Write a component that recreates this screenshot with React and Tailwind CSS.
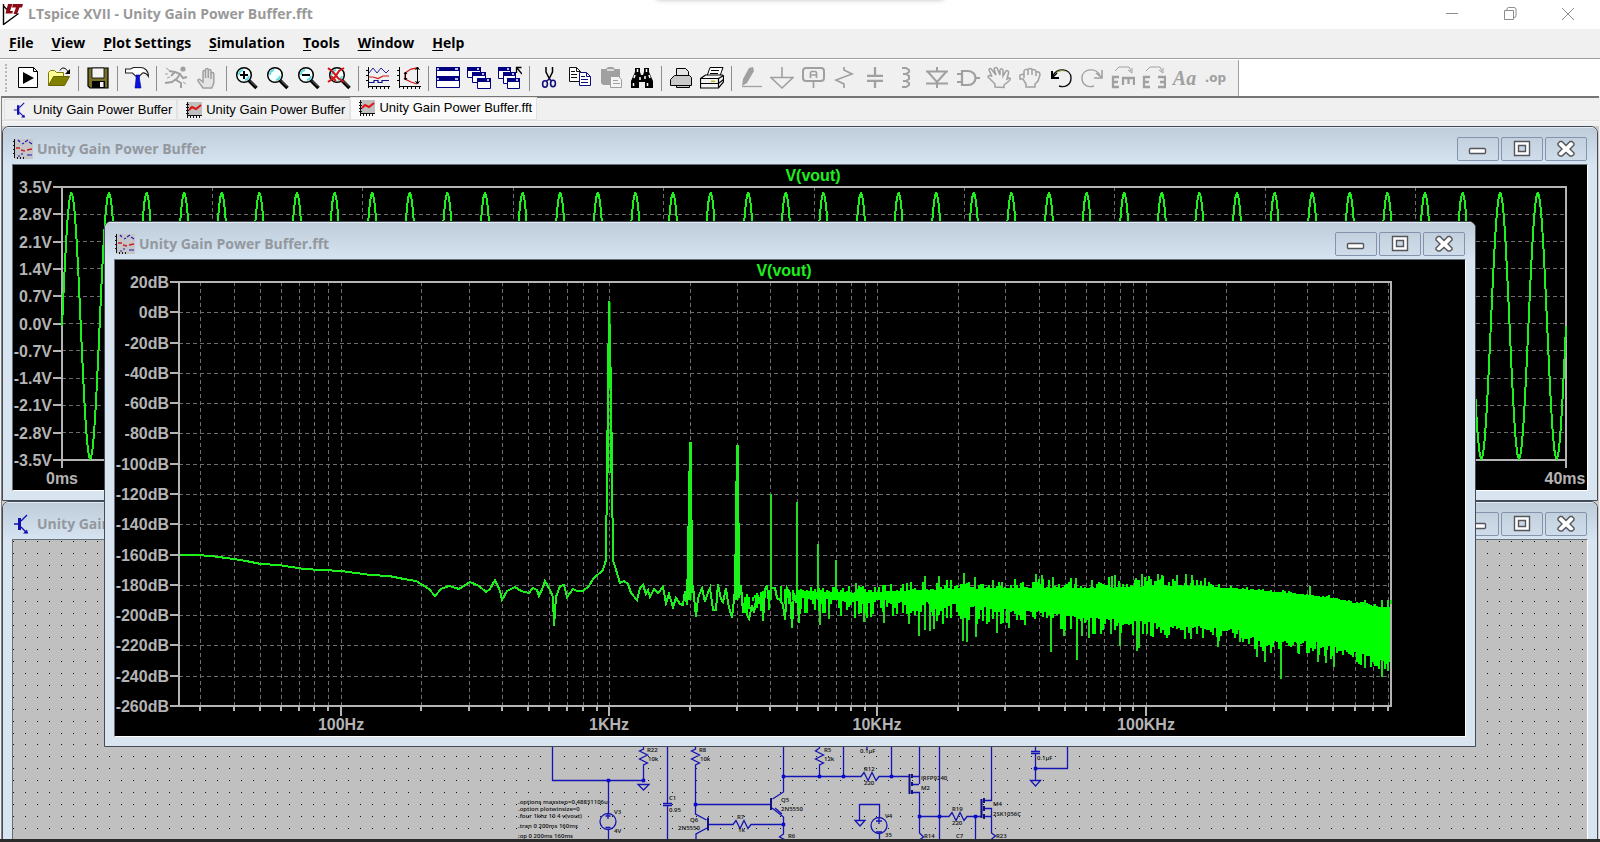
import React from "react";

const UI = "font-['Open_Sans','Noto_Sans',sans-serif]";
const ARIAL = "font-['Liberation_Sans',Arial,sans-serif]";
const NAVY = "#000080";
const GRAY = "#a0a0a0";

/* ---------- small drawings ---------- */

function Ico({ children, size = 24, box = 24 }) {
  return (
    <svg width={size} height={size} viewBox={`0 0 ${box} ${box}`} fill="none" aria-hidden="true" className="shrink-0">
      {children}
    </svg>
  );
}

const Logo = () => (
  <Ico size={22} box={22}>
    <path d="M1.500 1v20.500l15-11" stroke="#000" strokeWidth="1.400" />
    <path d="M1.500 3l6 6" stroke="#000" strokeWidth="1.200" />
    <path d="M6 1h4.500L8 8h3l-.800 2.500H3.500zM11 1h10l-1 3.500h-2.500L15 11h-3.500L14 4.500h-4z" fill="#8b0a14" />
  </Ico>
);

const Transistor = ({ size = 20 }) => (
  <Ico size={size} box={20}>
    <path d="M1 10h5M14 1l-6 6M8 13l6 6" stroke="#1010b0" strokeWidth="1.400" />
    <path d="M6.500 4v12" stroke="#1010b0" strokeWidth="3" />
    <path d="M15 19.500h-5l4-4z" fill="#1010b0" />
  </Ico>
);

const TabPlot = () => (
  <Ico size={16} box={16}>
    <path d="M2 0h14v14H2z" fill="#c0c0c0" />
    <path d="M1.500 0v16M0 2.500h3M0 5.500h3M0 8.500h3M0 11.500h3M1 13.500h15M4.500 13v3M7.500 13v3M10.500 13v3M13.500 13v3" stroke="#111" />
    <path d="M3 8l3-3 4 2 5-4" stroke="#e01515" strokeWidth="2" />
  </Ico>
);

const WinPlot = () => (
  <Ico size={20} box={20}>
    <path d="M1 0h19v20H1z" fill="#c6c6ca" />
    <path d="M1.500 0v19M0 2.500h1M0 6.500h1M0 10.500h1M0 14.500h1M4.500 18v2M7.500 18v2M10.500 18v2" stroke="#111" />
    <path d="M5 1l2 2M9 5l2-1M12 3l3-2M16 3l3 2M5 17h2M8 15h2M14 16h5" stroke="#1a1aa8" strokeWidth="1.100" />
    <path d="M3 9h4M8 11l4 1M14 11l5-1" stroke="#cc2020" strokeWidth="1.300" />
  </Ico>
);

const Lens = ({ children }) => (
  <>
    <circle cx="10" cy="9" r="7.300" fill="#f4ffff" stroke="#000" strokeWidth="1.500" />
    <path d="M5 9a5 5 0 0 1 4-5M15 10a5 5 0 0 1-4 4" stroke="#5fd8e0" strokeWidth="1.800" />
    <path d="M15 14.500l7.500 7.500" stroke="#000" strokeWidth="3.600" />
    <path d="M16 14.500l6 6" stroke="#999" strokeWidth="0.800" />
    {children}
  </>
);

const MiniWin = ({ x, y, w = 12, h = 11 }) => (
  <>
    <path d={`M${x + 0.5} ${y + 0.5}h${w}v${h}h-${w}z`} fill="#fff" stroke={NAVY} />
    <path d={`M${x} ${y}h${w + 1}v4h-${w + 1}z`} fill={NAVY} />
    <path d={`M${x + w - 3} ${y + 2}h2`} stroke="#fff" strokeWidth="1.400" />
  </>
);

const PlotAxes = () => (
  <path d="M2.500 1v21M0 4.500h3M0 9.500h3M0 14.500h3M2 20.500h22M6.500 20v3M10.500 20v3M14.500 20v3M18.500 20v3M22.500 20v3" stroke="#000" />
);

const icons = {
  run: (
    <>
      <path d="M2.500 1.500h15l4 4v16h-19z" fill="#fff" stroke="#000" />
      <path d="M17.500 1.500v4h4" stroke="#000" />
      <path d="M7 6l11 6-11 6z" fill="#000" />
    </>
  ),
  open: (
    <>
      <path d="M1.500 19V6.500l2-2h4l2 2h7v4" fill="#ffff99" stroke="#807a00" />
      <path d="M1.500 19.500l5-9h16l-5 9z" fill="#808000" stroke="#6a6400" />
      <path d="M13 4.500c2-4 6-3 8 1.500" stroke="#000" />
      <path d="M23 3v5h-5z" fill="#000" />
    </>
  ),
  save: (
    <>
      <path d="M2 2h20v20H4l-2-2z" fill="#76702a" stroke="#000" strokeWidth="1.200" />
      <path d="M6 2h12v10H6z" fill="#f4f4f4" stroke="#000" strokeWidth="0.800" />
      <path d="M6 15h13v7H6z" fill="#000" />
      <path d="M14 16h3.500v5H14z" fill="#f0f0f0" />
    </>
  ),
  hammer: (
    <>
      <path d="M.500 3h5l3-1.500h7c4 0 8 3 8 9-2-3-4-4-6-3.500l-3 3h-4L7.500 7 .500 7z" fill="#fff" stroke="#222" strokeWidth="1.100" />
      <path d="M11 9h3.500v4l1.500 9h-6l1-9z" fill="#0b10e0" stroke="#02028a" strokeWidth="0.600" />
    </>
  ),
  runner: (
    <>
      <circle cx="19" cy="3" r="2.600" fill={GRAY} />
      <path d="M5 5l6 1 5 2-4 6 5 3v5M12 13l-4 3-7 1M16 8l3 4 4-1M11 6l-4 4" stroke={GRAY} strokeWidth="2" />
      <path d="M2 2l3 2M1 8h3M3 12l3-1M19 16l3 2" stroke={GRAY} />
    </>
  ),
  hand: (
    <path d="M8 22l-5-7c-.500-2 1.500-2 2.500-1l2.500 2V6c0-2 2.500-2 2.500 0v6-8c0-2 2.800-2 2.800 0v8-7c0-2 2.700-2 2.700 0v8-5c0-2 2.800-2 2.800 0v9l-2 5z" fill="#e4e4e4" stroke={GRAY} strokeWidth="1.500" />
  ),
  zoomIn: <Lens><path d="M6 9h8M10 5v8" stroke="#000" strokeWidth="2" /></Lens>,
  zoom: <Lens />,
  zoomOut: <Lens><path d="M6 9h8" stroke="#000" strokeWidth="2" /></Lens>,
  zoomFit: <Lens><path d="M1 2l5 4 5 6 6 4M17 2l-5 3-4 6-7 5M4 10l5 5" stroke="#d41414" strokeWidth="2" /></Lens>,
  plot: (
    <>
      <PlotAxes />
      <path d="M3 7l4-5 4 5 4-5 5 5 3-3" stroke="#20209a" />
      <path d="M3 11h4l5 1.500 5-2.500h6" stroke="#d01818" strokeWidth="1.200" />
      <path d="M3 16.500h5v-2h4v2h4v-2h7" stroke="#10108a" strokeWidth="1.200" />
    </>
  ),
  plotXY: (
    <>
      <PlotAxes />
      <path d="M20 2l-6 1-6 4v6l6 3 6 2" stroke="#d01818" strokeWidth="1.300" />
      <path d="M8.500 6v8M7 8l1.500-2 1.500 2M7 12l1.500 2 1.500-2M20.500 1v17M18.500 4l2-3 2 3M18.500 15l2 3 2-3" stroke="#000" />
    </>
  ),
  tile: (
    <>
      <path d="M.500 1.500h23v20h-23z" fill="#fff" stroke={NAVY} />
      <path d="M0 1h24v4H0zM0 10h24v5H0z" fill={NAVY} />
      <path d="M1 3h2M19 3h3M1 13h2M19 13h3" stroke="#fff" strokeWidth="1.400" />
    </>
  ),
  cascade: (
    <>
      <MiniWin x={0} y={1} w={13} h={10} />
      <MiniWin x={5} y={6} w={13} h={10} />
      <MiniWin x={10} y={12} w={13} h={10} />
    </>
  ),
  cascadeUp: (
    <>
      <MiniWin x={0} y={1} />
      <MiniWin x={5} y={6} />
      <MiniWin x={9} y={12} h={10} />
      <path d="M24 8l-5-6M18.500 7V1.500h5" stroke="#000" strokeWidth="1.300" />
    </>
  ),
  cut: (
    <>
      <path d="M9 1v5l4 8M15.500 1v5l-4 8" stroke="#000" strokeWidth="1.500" />
      <ellipse cx="8" cy="18" rx="2.400" ry="3.200" stroke="#10107a" strokeWidth="1.600" />
      <ellipse cx="16" cy="17.500" rx="2.400" ry="3.200" stroke="#10107a" strokeWidth="1.600" />
      <path d="M9.500 15l3-2 2 2" stroke="#10107a" strokeWidth="1.500" />
    </>
  ),
  copy: (
    <>
      <path d="M1.500 1.500h7l4 4v10h-11z" fill="#fff" stroke="#111" />
      <path d="M8.500 1.500v4h4M3 5.500h4M3 8.500h6M3 11.500h6" stroke="#111" />
      <path d="M11.500 6.500h7l4 4v9h-11z" fill="#fff" stroke="#10107a" />
      <path d="M18.500 6.500v4h4M13 10.500h4M13 13.500h7M13 16.500h7" stroke="#10107a" />
    </>
  ),
  paste: (
    <>
      <path d="M2 3h5l2-2h5l2 2h5v16H4l-2-2z" fill={GRAY} />
      <path d="M8 4h7" stroke="#f0f0f0" strokeWidth="1.500" />
      <path d="M11.500 10.500h8l3 3v8h-11z" fill="#f4f4f4" stroke={GRAY} />
      <path d="M14 14.500h5M14 17.500h7" stroke={GRAY} />
    </>
  ),
  find: (
    <>
      <path d="M5 2h5v4l1 3h2l1-3V2h5v4l4 9v7h-8v-6h-6v6H1v-7l4-9z" fill="#000" />
      <path d="M7.500 3v3M16.500 3v3M5 9l-1 3M10 11v3M15 10v3M19 9l1 3M3.500 17v3M17.500 17v3" stroke="#fff" strokeWidth="1.500" />
    </>
  ),
  print: (
    <>
      <path d="M7.500 9.500v-7h9l3 3v4" fill="#e4e4e4" stroke="#000" />
      <path d="M1.500 19.500v-6l4-4h15l2 2v8h-2v2h-13v-2z" fill="#c9c9c9" stroke="#000" />
      <path d="M7 19.500h14" stroke="#000" />
    </>
  ),
  printSetup: (
    <>
      <path d="M7 10l3-8.500h13l-3 8.500" fill="#fff" stroke="#000" />
      <path d="M11 4.500h8M10 7.500h8" stroke="#000" />
      <path d="M.500 12.500l5-3.500h17l1 1v6l-5 6H.500z" fill="#f4f4f4" stroke="#000" strokeWidth="1.200" />
      <path d="M.500 12.500h18v9M18.500 12.500l5-3M.500 17.500h18l5-4" stroke="#000" strokeWidth="1.200" />
      <path d="M11 15.300h4" stroke="#b8b818" strokeWidth="1.500" />
    </>
  ),
  pencil: (
    <>
      <path d="M10 2l4-1 1 4-7 12-5 3 1-7z" fill={GRAY} />
      <path d="M3 20.500h20" stroke={GRAY} strokeWidth="1.300" />
    </>
  ),
  ground: <path d="M12 1v10M1 11.500h22L12 22z" stroke={GRAY} strokeWidth="1.600" />,
  label: (
    <>
      <rect x="2" y="2" width="21" height="13" rx="3" stroke={GRAY} strokeWidth="2" />
      <path d="M12.500 15v7M9.500 12V6.500l1-1h4l1 1V12M9.500 9h6" stroke={GRAY} strokeWidth="1.700" />
    </>
  ),
  resistor: <path d="M12 1v3l8 4-16 6 8 4v4" stroke={GRAY} strokeWidth="1.700" />,
  cap: <path d="M12 1v8M12 15v7M4 9.800h16M4 14.800h16" stroke={GRAY} strokeWidth="2.300" />,
  inductor: <path d="M8 2h4l3 2v2l-3 2h-3 3l3 2v3l-3 2h-3 3l3 2v2l-3 2H8" stroke={GRAY} strokeWidth="2" />,
  diode: <path d="M12 1v4M12 17v5M1 5.500h22M3 6l9 10 9-10M1 17.500h22" stroke={GRAY} strokeWidth="2" />,
  gate: <path d="M1 8h5M1 16h5M6 4v16M6 5h6c10 0 10 14 0 14H6M19 12h5" stroke={GRAY} strokeWidth="2.200" />,
  move: (
    <path d="M8 21v-3L1 11c0-2 2-2 4-.500L2 4c0-2 2-2 3 0l4 5-2-6c1-2 3-2 3.500 0l2.500 6V4c1-2 3-1 3 0v6l3-5c1-1 3 0 2.500 2L20 13l2-1c2 0 1 2 0 3l-5 4v2.500z" stroke={GRAY} strokeWidth="1.500" />
  ),
  drag: (
    <path d="M8 21v-3l-3-5H2V9l4-1V5c1-2 3-2 4-1 1-2 4-2 4 0 2-1 4 0 4 2 3-1 4 1 4 3l-2 6-3 3v3zM10 4v5M14 4v5M18 6v4M6 8v4" stroke={GRAY} strokeWidth="1.500" />
  ),
  undo: (
    <>
      <path d="M4 10c3-9 18-8 18 2 0 7-6 10-12 8" stroke="#111" strokeWidth="1.400" />
      <path d="M7 7c2-2 6-3 9-2" stroke="#8a9a28" strokeWidth="1" />
      <path d="M3 5v7h7" stroke="#000" strokeWidth="2" />
      <path d="M3 12l5-5" stroke="#000" strokeWidth="1.500" />
    </>
  ),
  redo: (
    <>
      <path d="M20 10C17 1 2 2 2 12c0 7 6 10 12 8" stroke={GRAY} strokeWidth="1.400" />
      <path d="M22 4v8h-8M21 11l-5-4" stroke={GRAY} strokeWidth="1.600" />
    </>
  ),
  rotate: (
    <>
      <path d="M4 5l4-4h10l2 4M17 4l4 3V2" stroke={GRAY} />
      <path d="M8 11H2v10h6M2 16h5M12 19v-7h11v7M17.500 12v6" stroke={GRAY} strokeWidth="2.300" />
    </>
  ),
  mirror: (
    <>
      <path d="M4 5l4-4h10l2 4M17 4l4 3V2" stroke={GRAY} />
      <path d="M8 11H2v10h6M2 16h5M16 11h7v10h-7M23 16h-5" stroke={GRAY} strokeWidth="2.300" />
    </>
  ),
};

/* ---------- window chrome ---------- */

const toolGroups = [
  [["run", "Run"], ["open", "Open"]],
  [["save", "Save"]],
  [["hammer", "Control Panel"]],
  [["runner", "Run simulation"], ["hand", "Halt"]],
  [["zoomIn", "Zoom in"], ["zoom", "Zoom area"], ["zoomOut", "Zoom out"], ["zoomFit", "Zoom to fit"]],
  [["plot", "Autorange"], ["plotXY", "Vertical autorange"]],
  [["tile", "Tile"], ["cascade", "Cascade"], ["cascadeUp", "Close all"]],
  [["cut", "Cut"], ["copy", "Copy"], ["paste", "Paste"], ["find", "Find"]],
  [["print", "Print"], ["printSetup", "Print setup"]],
  [
    ["pencil", "Wire"], ["ground", "Ground"], ["label", "Label net"], ["resistor", "Resistor"],
    ["cap", "Capacitor"], ["inductor", "Inductor"], ["diode", "Diode"], ["gate", "Component"],
    ["move", "Move"], ["drag", "Drag"], ["undo", "Undo"], ["redo", "Redo"],
    ["rotate", "Rotate"], ["mirror", "Mirror"], ["text", "Text"], ["op", "SPICE directive"],
  ],
];

function ToolButton({ id, label }) {
  return (
    <button type="button" aria-label={label} className="flex h-9 w-[31px] items-center justify-center">
      {id === "text" ? (
        <span className="font-['Liberation_Serif',serif] text-xl leading-none font-bold text-[#a0a0a0] italic">Aa</span>
      ) : id === "op" ? (
        <span className="font-['DejaVu_Sans',sans-serif] text-xs leading-none font-bold text-[#a0a0a0]">.op</span>
      ) : (
        <Ico>{icons[id]}</Ico>
      )}
    </button>
  );
}

function Toolbar() {
  return (
    <div className="flex h-9 shrink-0 bg-white">
      <div className="flex items-center border-r border-[#a0a0a0] bg-[#f0f0f0] pr-[7px] pl-[5px]">
        <div className="mr-[5px] h-7 w-0 border-l-2 border-dotted border-[#b8b8b8]" />
        {toolGroups.map((group, i) => (
          <React.Fragment key={i}>
            {i > 0 && (
              <div className="flex w-2 justify-center">
                <div className="h-[25px] w-px bg-[#8c8c8c]" />
              </div>
            )}
            {group.map(([id, label]) => (
              <ToolButton key={id} id={id} label={label} />
            ))}
          </React.Fragment>
        ))}
      </div>
    </div>
  );
}

function Menu() {
  const items = ["File", "View", "Plot Settings", "Simulation", "Tools", "Window", "Help"];
  return (
    <nav className={`flex h-[30px] shrink-0 items-center gap-[18px] border-b border-[#a0a0a0] bg-[#f0f0f0] px-[9px] pb-0.5 ${UI} text-sm leading-5 font-bold text-black`}>
      {items.map((t) => (
        <button key={t} type="button" className="whitespace-nowrap">
          <span className="underline decoration-1 underline-offset-2">{t[0]}</span>
          {t.slice(1)}
        </button>
      ))}
    </nav>
  );
}

function Tabs() {
  const tab = "flex items-center gap-1 whitespace-nowrap border border-[#e2e2e2] pr-1 pl-2";
  return (
    <div className={`flex h-[23px] items-end border-b border-[#e0e0e0] bg-[#f0f0f0] pl-0.5 ${ARIAL} text-[13px] leading-5 text-black`}>
      <button type="button" className={`${tab} h-[21px]`}>
        <Transistor size={16} />
        Unity Gain Power Buffer
      </button>
      <button type="button" className={`${tab} h-[21px]`}>
        <TabPlot />
        Unity Gain Power Buffer
      </button>
      <button type="button" className={`${tab} h-[23px] bg-[#fafafa] pb-0.5`}>
        <TabPlot />
        Unity Gain Power Buffer.fft
      </button>
    </div>
  );
}

function CaptionButton({ label, children }) {
  return (
    <button type="button" aria-label={label} className="flex h-6 w-[42px] items-center justify-center rounded-[2px] border border-[#8494ae] bg-linear-to-b from-[#c3d0de] to-[#cfdcea]">
      <svg width="20" height="18" viewBox="0 0 20 18" fill="none" aria-hidden="true">
        {children}
      </svg>
    </button>
  );
}

function ChildWindow({ title, icon, className, clientClass, children }) {
  return (
    <section className={`absolute flex flex-col overflow-hidden rounded-t-[7px] border border-[#434c56] bg-[#d8e4f0] ${className}`}>
      <header className="flex h-[37px] shrink-0 items-center gap-1 border-t border-[#e2eaf2] bg-linear-to-b from-[#bfccda] to-[#d6e3f0] pt-[6px] pr-[10px] pl-[10px]">
        {icon}
        <h2 className={`grow whitespace-nowrap ${UI} text-sm leading-5 font-bold text-[#93989e]`}>{title}</h2>
        <div className="flex gap-0.5">
          <CaptionButton label="Minimize">
            <rect x="1.500" y="8.500" width="16" height="5" rx="1" fill="#fff" stroke="#54565c" strokeWidth="1.400" />
          </CaptionButton>
          <CaptionButton label="Maximize">
            <path fillRule="evenodd" d="M2.500 1.500h15v14h-15zM6.500 5.500v6h7v-6z" fill="#fff" stroke="#54565c" strokeWidth="1.400" />
          </CaptionButton>
          <CaptionButton label="Close">
            <path d="M4 1.500h2l4 4 4-4h2l2 2v1.500l-4 4 4 4v1.500l-2 1.500h-2l-4-3.500-4 3.500H4l-2-1.500V13l4-4-4-4V3.500z" fill="#fff" stroke="#54565c" strokeWidth="1.400" />
          </CaptionButton>
        </div>
      </header>
      <div className={`mx-[9px] grow overflow-hidden border-t border-r border-b border-l border-t-[#6a7078] border-r-white border-b-white border-l-[#6a7078] ${clientClass}`}>
        {children}
      </div>
    </section>
  );
}

/* ---------- plots ---------- */

const TRACE = "#1ef01e";
const AXIS = "#b4b4b4";
const GRID = "#6c6c6c";
const plotText = `${ARIAL} text-base font-bold`;

function TimePlot() {
  const L = 62, R = 1566, T = 187, B = 460;
  const pts = [];
  for (let x = L; x <= R; x += 1) {
    pts.push(`${x},${(326 - 133 * Math.sin((2 * Math.PI * (x - L)) / 37.6)).toFixed(1)}`);
  }
  const rows = Array.from({ length: 11 }, (_, i) => T + ((B - T) * i) / 10);
  const labels = ["3.5V", "2.8V", "2.1V", "1.4V", "0.7V", "0.0V", "-0.7V", "-1.4V", "-2.1V", "-2.8V", "-3.5V"];
  return (
    <svg width="1574" height="325" viewBox="13 165 1574 325" fill="none" className="block" role="img" aria-label="V(vout) against time">
      <g stroke={GRID} strokeDasharray="4 3" shapeRendering="crispEdges">
        {rows.slice(1, 10).map((y) => <line key={y} x1={L} x2={R} y1={y} y2={y} />)}
        {Array.from({ length: 9 }, (_, i) => L + 150.4 * (i + 1)).map((x) => <line key={x} x1={x} x2={x} y1={T} y2={B} />)}
      </g>
      <path d={`M${L} ${B + 8}V${T}H${R}V${B + 8}M${L} ${B}H${R}`} stroke={AXIS} strokeWidth="2" />
      {rows.map((y, i) => (
        <g key={y}>
          <line x1={L - 9} x2={L} y1={Math.round(y)} y2={Math.round(y)} stroke={AXIS} strokeWidth="2" />
          <text x={L - 10} y={Math.round(y) + 6} textAnchor="end" fill={AXIS} className={plotText}>{labels[i]}</text>
        </g>
      ))}
      <text x={L} y="484" textAnchor="middle" fill={AXIS} className={plotText}>0ms</text>
      <text x={R - 1} y="484" textAnchor="middle" fill={AXIS} className={plotText}>40ms</text>
      <text x="813" y="181" textAnchor="middle" fill={TRACE} className={plotText}>V(vout)</text>
      <polyline points={pts.join(" ")} stroke={TRACE} strokeWidth="2" shapeRendering="crispEdges" />
    </svg>
  );
}

const lowTrace =
  "180,555 196,555 211,556 234,559 246,561 261,564 279,565 304,569 341,571 371,575 389,576 404,579 416,581 429,589 435,596 441,589 449,586 459,589 470,582 479,586 486,592 490,589 495,580 500,591 502,600 507,591 515,587 521,591 529,593 533,588 537,590 539,596 543,587 545,581 550,590 553,597 554,626 556,597 560,586 564,585 567,597 573,589 577,591 583,591 589,586 593,579 603,570 606,560 607,473 608,388 609,301 611,388 612,473 613,560 620,583 624,581 628,584 631,593 637,600 640,588 643,585 646,594 648,590 650,597 654,589 658,593 663,587 666,603 669,594 673,607 676,598 680,604 683,605 685,591 687,605 688,553 689,500 690,443 691,443 692,593 693,585 694,597 696,617 698,598 702,588 705,602 707,595 710,588 713,610 716,610 718,584 721,599 723,602 726,588 728,603 732,618 735,590 736,520 737,446 738,446 739,598 741,585 743,613 745,600 747,615 749,619 752,605 754,613 757,593 759,602 762,592 763,621 765,590 767,585 769,603 771,588 775,588 777,598 780,600 783,605 785,620 787,588 790,593 792,628 794,593 796,603 797,588 799,623 801,590";

const topEnv = [[741, 599], [755, 597], [780, 591], [850, 593], [900, 591], [960, 589], [1020, 588], [1100, 588], [1150, 587], [1190, 586], [1210, 587], [1240, 589], [1260, 591], [1310, 595], [1340, 600], [1365, 605], [1391, 609]];
const topJit = [[741, 6], [800, 6], [850, 7], [920, 10], [1000, 9], [1150, 12], [1195, 11], [1215, 5], [1230, 3], [1391, 3]];
const botEnv = [[741, 599], [755, 598], [800, 598], [850, 600], [900, 600], [950, 603], [1000, 608], [1050, 612], [1080, 617], [1150, 622], [1200, 626], [1240, 630], [1262, 639], [1320, 642], [1345, 650], [1365, 654], [1391, 662]];
const botJit = [[741, 16], [800, 17], [850, 20], [930, 24], [1000, 17], [1150, 16], [1220, 14], [1391, 13]];

const peaks = [[771, 494], [797, 502], [818, 544], [836, 560], [856, 583], [907, 583], [925, 576], [939, 576], [964, 573], [975, 577], [993, 580], [1002, 582], [1036, 574], [1042, 575], [1053, 577], [1076, 578], [1092, 580], [1112, 576], [1115, 575], [1136, 578], [1142, 574], [1151, 579], [1158, 574], [1162, 575], [1177, 575], [1186, 574], [1192, 575], [1205, 578], [1310, 586], [1391, 604]];
const dips = [[820, 625], [829, 619], [864, 622], [884, 623], [909, 624], [919, 636], [925, 630], [930, 631], [934, 629], [963, 641], [967, 642], [976, 637], [997, 633], [1009, 628], [1051, 652], [1064, 636], [1077, 660], [1082, 636], [1089, 638], [1111, 634], [1120, 646], [1137, 651], [1139, 648], [1191, 639], [1218, 647], [1240, 642], [1257, 657], [1265, 662], [1281, 679], [1298, 653], [1318, 662], [1326, 663], [1334, 667], [1365, 668], [1382, 677], [1388, 671]];

function lerp(table, x) {
  for (let i = 1; i < table.length; i += 1) {
    const [x0, y0] = table[i - 1];
    const [x1, y1] = table[i];
    if (x <= x1) return y0 + ((y1 - y0) * (x - x0)) / (x1 - x0);
  }
  return table[table.length - 1][1];
}

function noisePath() {
  let seed = 7919;
  const rnd = () => {
    seed = (seed * 16807) % 2147483647;
    return seed / 2147483647;
  };
  let d = "";
  for (let x = 741; x <= 1390; x += 2) {
    const density = x < 797 ? 0.6 : 1;
    const top = lerp(topEnv, x) - lerp(topJit, x) * rnd() ** 2.2;
    const bot = lerp(botEnv, x) + lerp(botJit, x) * rnd() ** 1.6;
    if (rnd() <= density) d += `M${x} ${Math.round(top)}V${Math.round(bot)}`;
  }
  return d;
}

function FftPlot() {
  const L = 179, R = 1391, T = 282, B = 706;
  const rows = Array.from({ length: 15 }, (_, i) => ({ db: 20 - 20 * i, y: Math.round(T + ((B - T) * i) / 14) }));
  const cols = [];
  for (let dec = 1; dec <= 5; dec += 1) {
    for (let m = 1; m < 10; m += 1) {
      const x = Math.floor(341 + 268.4 * (dec - 2 + Math.log10(m)));
      if (x > L && x < R) cols.push({ x, major: m === 1 });
    }
  }
  return (
    <svg width="1350" height="476" viewBox="115 260 1350 476" fill="none" className="block" role="img" aria-label="V(vout) spectrum">
      <g stroke={GRID} strokeDasharray="4 3" shapeRendering="crispEdges">
        {rows.slice(1, 14).map(({ y }) => <line key={y} x1={L} x2={R} y1={y} y2={y} />)}
        {cols.map(({ x }) => <line key={x} x1={x} x2={x} y1={T} y2={B} />)}
      </g>
      <path d={`M${L} ${T}H${R}V${B}H${L}z`} stroke={AXIS} strokeWidth="2" />
      {rows.map(({ db, y }) => (
        <g key={db}>
          <line x1={L - 9} x2={L} y1={y} y2={y} stroke={AXIS} strokeWidth="2" />
          <text x={L - 10} y={y + 6} textAnchor="end" fill={AXIS} className={plotText}>{`${db}dB`}</text>
        </g>
      ))}
      {cols.map(({ x, major }) => (
        <line key={x} x1={x} x2={x} y1={B} y2={B + (major ? 10 : 5)} stroke={AXIS} strokeWidth="2" />
      ))}
      {["100Hz", "1KHz", "10KHz", "100KHz"].map((t, i) => (
        <text key={t} x={Math.floor(341 + 268.4 * i)} y="730" textAnchor="middle" fill={AXIS} className={plotText}>{t}</text>
      ))}
      <text x="784" y="276" textAnchor="middle" fill={TRACE} className={plotText}>V(vout)</text>
      <polyline points={lowTrace} stroke={TRACE} strokeWidth="2" shapeRendering="crispEdges" />
      <path d="M609.500 302V388M608 388V473M611 388V473M690.500 444V600M689 500V600M737.500 446V600M736 520V600" stroke={TRACE} strokeWidth="2" />
      <g shapeRendering="crispEdges" strokeWidth="2">
        <path d={peaks.map(([x, y]) => `M${x} ${y}V600`).join("") + dips.map(([x, y]) => `M${x} ${y}V600`).join("")} stroke="#22dc22" />
        <path d={noisePath()} stroke="#00ff00" />
      </g>
    </svg>
  );
}

/* ---------- schematic ---------- */

function dotGrid() {
  let d = "";
  for (let r = 0; r < 26; r += 1) {
    for (let c = 0; c < 132; c += 1) {
      d += `M${Math.round(13 + 11.98 * c)} ${Math.round(541 + 11.97 * r)}h1v1h-1z`;
    }
  }
  return d;
}

const spiceText = [
  [518, 804, ".options maxstep=0.48831106u"], [518, 811, ".option plotwinsize=0"], [518, 818, ".four 1khz 10 4 v(vout)"],
  [518, 828, ".tran 0 200ms 160ms"], [518, 838, ";op 0 200ms 160ms"],
  [647, 752, "R22"], [648, 761, "10k"], [614, 814, "V3"], [614, 833, "4V"], [669, 800, "C1"], [669, 812, "0.95"],
  [699, 752, "R8"], [700, 761, "10k"], [690, 822, "Q6"], [678, 830, "2N5550"], [737, 819, "R7"], [738, 832, "1k"],
  [781, 802, "Q5"], [781, 811, "2N5550"], [788, 838, "R6"], [824, 752, "R5"], [824, 761, "12k"],
  [860, 753, "0.1µF"], [864, 771, "R12"], [864, 785, "220"], [921, 780, "IRFP9240"], [921, 790, "M2"],
  [885, 818, "V4"], [885, 837, "35"], [952, 811, "R19"], [952, 825, "220"], [956, 838, "C7"], [924, 838, "R14"],
  [993, 806, "M4"], [993, 816, "2SK1056C"], [996, 838, "R23"], [1037, 760, "0.1µF"],
];

function Schematic() {
  return (
    <svg width="1574" height="300" viewBox="13 540 1574 300" fill="none" className="block" role="img" aria-label="Schematic">
      <path d={dotGrid()} fill="#111" shapeRendering="crispEdges" />
      <g stroke="#1414b4" strokeWidth="1.300">
        <path d="M552.500 740V780.500H643.500M608.500 780.500V814M608.500 829V842" />
        <path d="M643.500 740v9l-4 2 8 4-8 4 8 4-4 2v16M638 784.500h11l-5.500 5.500z" />
        <circle cx="608" cy="821.500" r="8" />
        <path d="M608 813v6M605.500 816h5M605.500 827.500h5" />
        <path d="M667.500 740V803M663 803.500h9M663 805.500h9M667.500 806V842" />
        <path d="M695.500 740v9l-4 2 8 4-8 4 8 4-4 2V814l11 6M695.500 804.500H771M707 828l-11 6v8M709 824.500h24l3-4 4 8 4-8 4 8 3-4h33" />
        <path d="M783.500 740V792l-11 7M772 808l11.500 9v17l-4 3 6 3M775 808l7 6M819.500 740v8l-4 3 8 4-8 4 8 4-4 2v12M783.500 776.500H861l3-4 4 8 4-8 4 8 3-4H909.500" />
        <path d="M843.500 740V776.500M891.500 740V776.500M919.500 740V776.500H911M919.500 784V776.500M911 784.500h8M911 792.500h8.500V833l4 4-4 3M939.500 740V842" />
        <path d="M919.500 816.500H949l3-4 4 8 4-8 4 8 3-4h14M975.500 816.500V842M981.500 799V816.500M983.500 816.500h8M991.500 740V800.500H984M984 808.500h7.500V833l4 3-4 3" />
        <path d="M866 804.500h13.500V818M859.500 804.500H880M859.500 804V820M855 820.500h10l-5 5.500zM879.500 833v9" />
        <circle cx="879" cy="825.500" r="8" />
        <path d="M879 818v6M876 821h6M876 832h6" />
        <path d="M1035.500 746v5M1031 751.500h9M1031 753.500h9M1035.500 754V780M1067.500 740V768.500H1035.500M1030.500 780.500h10l-5 5.500zM867 746v4" />
      </g>
      <path d="M708 817.500v13M771 798v12M909.500 774v20M912 774v4M912 782v4M912 790v4M981.500 799v19M984 798v5M984 806v5M984 814v5" stroke="#101080" strokeWidth="2" />
      <path d="M607 779h3v3h-3zM642 779h3v3h-3zM694 803h3v3h-3zM782 775h3v3h-3zM782 823h3v3h-3zM818 775h3v3h-3zM842 775h3v3h-3zM890 775h3v3h-3zM918 815h3v3h-3zM938 815h3v3h-3zM974 815h3v3h-3zM1034 767h3v3h-3z" fill="#0a0ad0" stroke="#0a0ad0" strokeWidth="0.500" />
      <g fill="#101010">
        {spiceText.map(([x, y, t]) => (
          <text key={`${x}-${y}`} x={x} y={y} className="font-['Open_Sans',sans-serif] text-[6px] font-semibold">{t}</text>
        ))}
      </g>
    </svg>
  );
}

/* ---------- page ---------- */

export default function App() {
  return (
    <div className="flex h-screen flex-col overflow-hidden bg-[#f0f0f0]">
      <header className="relative flex h-[29px] shrink-0 items-center bg-white pb-0.5 pl-[2px]">
        <div className="absolute top-[-8px] left-1/2 h-2 w-72 -translate-x-1/2 rounded-lg shadow-[0_0_5px_rgba(0,0,0,0.25)]" />
        <Logo />
        <h1 className={`ml-1 grow whitespace-nowrap ${UI} text-sm leading-5 font-bold text-[#999999]`}>
          LTspice XVII - Unity Gain Power Buffer.fft
        </h1>
        <div className="flex pr-[3px]">
          {[
            ["Minimize", "M4 9.500h12"],
            ["Restore", "M4.500 6.500h9v9h-9zM7 6V5q0-1.500 1.500-1.500H14q2 0 2 2V12q0 1.500-2 1.500"],
            ["Close", "M4 4l12 12M16 4L4 16"],
          ].map(([label, d]) => (
            <button key={label} type="button" aria-label={label} className="flex h-7 w-[58px] items-center justify-center">
              <Ico size={20} box={20}>
                <path d={d} stroke="#8c8c8c" />
              </Ico>
            </button>
          ))}
        </div>
      </header>
      <Menu />
      <div className="h-px shrink-0 bg-white" />
      <Toolbar />
      <main className="mx-px flex grow flex-col border-t-2 border-l border-t-[#757575] border-l-[#808080]">
        <Tabs />
        <div className="h-[5px] shrink-0 border-t border-[#f8f8f8] bg-[#f0f0f0]" />
        <div className="relative grow overflow-hidden bg-[#d0cdc8]">
          <ChildWindow title="Unity Gain Power Buffer" icon={<WinPlot />} className="top-0 right-px left-0 h-[375px] pb-[9px]" clientClass="bg-black">
            <TimePlot />
          </ChildWindow>
          <ChildWindow title="Unity Gain Power Buffer" icon={<Transistor />} className="top-[375px] right-px -bottom-3 left-0" clientClass="bg-[#c0c0c0]">
            <Schematic />
          </ChildWindow>
          <ChildWindow title="Unity Gain Power Buffer.fft" icon={<WinPlot />} className="top-[95px] left-[102px] h-[526px] w-[1372px] pb-[9px]" clientClass="bg-black">
            <FftPlot />
          </ChildWindow>
        </div>
      </main>
      <footer className="h-[3px] shrink-0 bg-[#2b2b2b]" />
    </div>
  );
}
